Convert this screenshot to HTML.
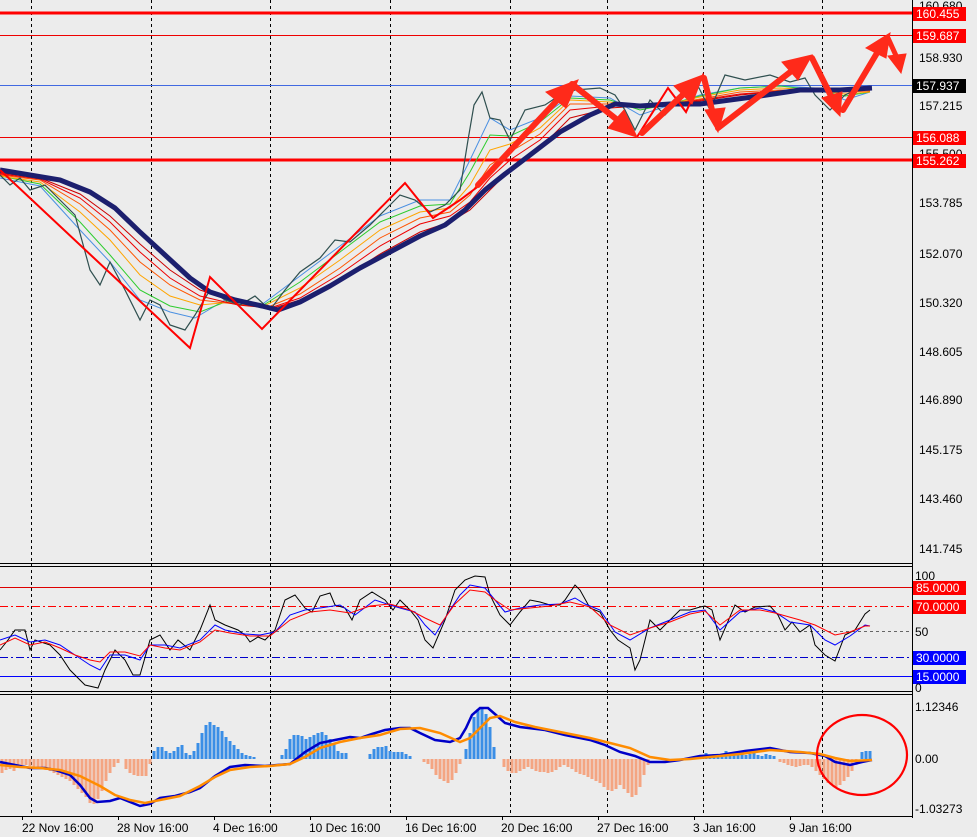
<!DOCTYPE html>
<html><head><meta charset="utf-8"><style>
html,body{margin:0;padding:0;background:#ececec;}
svg{display:block;font-family:"Liberation Sans",sans-serif;}
</style></head><body>
<svg width="977" height="837" viewBox="0 0 977 837" xmlns="http://www.w3.org/2000/svg" shape-rendering="auto">
<rect width="977" height="837" fill="#ececec"/>
<g stroke="#000" stroke-width="1" stroke-dasharray="3,3">
<line x1="31.5" y1="0" x2="31.5" y2="816"/><line x1="151.5" y1="0" x2="151.5" y2="816"/><line x1="270.5" y1="0" x2="270.5" y2="816"/><line x1="390.5" y1="0" x2="390.5" y2="816"/><line x1="510.5" y1="0" x2="510.5" y2="816"/><line x1="607.5" y1="0" x2="607.5" y2="816"/><line x1="703.5" y1="0" x2="703.5" y2="816"/><line x1="822.5" y1="0" x2="822.5" y2="816"/>
</g>
<line x1="0" y1="13" x2="912" y2="13" stroke="#f00" stroke-width="3"/>
<line x1="0" y1="35.5" x2="912" y2="35.5" stroke="#e00" stroke-width="1"/>
<line x1="0" y1="85.5" x2="912" y2="85.5" stroke="#4169e1" stroke-width="1"/>
<line x1="0" y1="137.5" x2="912" y2="137.5" stroke="#e00" stroke-width="1"/>
<line x1="0" y1="160" x2="912" y2="160" stroke="#f00" stroke-width="3"/>
<g fill="none" stroke-width="1">
<polyline stroke="#4a90e2" points="0,178 40,186 80,230 110,262 140,300 170,312 195,318 225,300 260,306 300,276 340,246 380,216 420,200 450,200 470,160 490,118 510,130 540,118 570,96 610,98 640,115 670,105 700,95 740,88 780,86 815,88 845,100 870,92"/>
<polyline stroke="#2ecc2e" points="0,176 40,184 80,222 110,255 140,290 170,306 200,312 230,300 262,306 300,282 340,252 380,222 420,206 450,204 470,172 490,135 510,136 540,122 570,98 610,100 640,110 670,104 700,96 740,88 780,86 815,90 845,96 870,92"/>
<polyline stroke="#ffa500" points="0,176 40,182 80,212 110,240 140,275 170,296 200,305 232,302 264,306 300,288 340,260 380,230 420,212 450,208 470,185 490,150 510,144 540,128 570,100 610,102 640,108 670,104 700,97 740,90 780,88 815,90 845,94 870,92"/>
<polyline stroke="#ff5500" points="0,175 40,180 80,204 110,230 140,262 170,285 200,300 235,304 268,307 300,294 340,268 380,238 420,218 450,212 470,195 490,165 510,152 540,134 570,104 610,104 640,106 670,104 700,99 740,92 780,90 815,90 845,92 870,91"/>
<polyline stroke="#e00" points="0,174 40,179 80,198 110,222 140,252 170,278 200,296 238,305 270,308 300,298 340,274 380,246 420,224 450,216 470,202 490,178 510,160 540,140 570,110 610,106 640,106 670,104 700,100 740,94 780,91 815,90 845,90 870,90"/>
<polyline stroke="#c00" points="0,173 40,178 80,194 110,216 140,244 170,270 200,290 238,302 270,309 300,300 340,280 380,254 420,232 450,222 470,210 490,190 510,170 540,148 570,118 610,108 640,106 670,104 700,101 740,95 780,91 815,89 845,89 870,89"/>
</g>
<polyline fill="none" stroke="#2f4f4f" stroke-width="1.2" points="0,175 10,185 20,178 30,190 45,185 60,200 75,215 90,270 100,285 110,262 125,290 140,320 150,300 160,305 170,325 185,330 195,315 210,290 225,300 240,305 255,296 270,310 285,290 300,272 320,258 335,240 350,242 370,225 385,210 400,195 415,200 430,212 445,205 460,190 468,140 474,105 482,92 490,118 500,120 510,140 525,110 545,105 560,95 575,90 600,88 615,95 625,110 635,130 650,100 665,115 680,100 695,80 710,110 725,75 745,80 770,75 790,82 805,78 815,95 830,110 845,95 860,88 870,86"/>
<polyline fill="none" stroke="#1c1f6e" stroke-width="5" stroke-linejoin="round" points="0,170 30,175 60,180 90,192 115,208 140,232 165,255 190,278 210,292 235,300 262,306 278,310 300,302 330,286 360,268 390,252 420,236 445,225 465,210 485,190 505,174 530,155 560,132 590,115 615,104 640,106 670,104 700,104 730,100 760,96 800,90 840,90 872,88"/>
<polyline fill="none" stroke="#f00" stroke-width="2" points="0,170 190,348 210,277 262,329 405,183 433,218 460,200 480,185"/>
<polyline fill="none" stroke="#f00" stroke-width="2" points="637,137 668,88 686,112 703,75 718,130"/>
<g fill="#ff2a1a" stroke="#ff2a1a" stroke-linecap="round">
<line x1="478" y1="185" x2="562" y2="95" stroke-width="6"/><polygon points="578,80 546,92 566,108"/>
<line x1="572" y1="84" x2="625" y2="126" stroke-width="6"/><polygon points="637,137 608,128 624,110"/>
<line x1="642" y1="133" x2="690" y2="88" stroke-width="6"/><polygon points="703,75 674,86 692,104"/>
<line x1="704" y1="78" x2="714" y2="118" stroke-width="6"/><polygon points="718,132 705,110 725,108"/>
<line x1="718" y1="128" x2="798" y2="66" stroke-width="6"/><polygon points="812,55 782,62 798,80"/>
<line x1="812" y1="58" x2="834" y2="102" stroke-width="6"/><polygon points="840,116 822,98 842,92"/>
<line x1="843" y1="110" x2="880" y2="48" stroke-width="6"/><polygon points="890,33 866,48 886,58"/>
<line x1="888" y1="38" x2="898" y2="60" stroke-width="5"/><polygon points="901,73 888,56 906,54"/>
</g>
<line x1="912.5" y1="0" x2="912.5" y2="818" stroke="#000"/>
<g font-size="12" fill="#000">
<text x="919" y="10">160.680</text>
<text x="919" y="62">158.930</text>
<text x="919" y="110">157.215</text>
<text x="919" y="158">155.500</text>
<text x="919" y="207">153.785</text>
<text x="919" y="258">152.070</text>
<text x="919" y="307">150.320</text>
<text x="919" y="356">148.605</text>
<text x="919" y="404">146.890</text>
<text x="919" y="454">145.175</text>
<text x="919" y="503">143.460</text>
<text x="919" y="553">141.745</text>
</g>
<g font-size="12">
<rect x="913" y="7" width="53" height="14" fill="#f00"/><text x="916" y="18" fill="#fff">160.455</text>
<rect x="913" y="29" width="53" height="14" fill="#f00"/><text x="916" y="40" fill="#fff">159.687</text>
<rect x="913" y="79" width="53" height="14" fill="#000"/><text x="916" y="90" fill="#fff">157.937</text>
<rect x="913" y="131" width="53" height="14" fill="#f00"/><text x="916" y="142" fill="#fff">156.088</text>
<rect x="913" y="154" width="53" height="14" fill="#f00"/><text x="916" y="165" fill="#fff">155.262</text>
</g>
<g stroke="#000" stroke-width="1"><line x1="0" y1="563.5" x2="912" y2="563.5"/><line x1="0" y1="566.5" x2="912" y2="566.5"/><line x1="0" y1="691.5" x2="912" y2="691.5"/><line x1="0" y1="694.5" x2="912" y2="694.5"/><line x1="0" y1="816.5" x2="912" y2="816.5"/></g>
<line x1="0" y1="587.5" x2="912" y2="587.5" stroke="#d00"/>
<line x1="0" y1="606.5" x2="912" y2="606.5" stroke="#f00" stroke-dasharray="8,3,2,3"/>
<line x1="0" y1="631.5" x2="912" y2="631.5" stroke="#666" stroke-dasharray="3,3"/>
<line x1="0" y1="657.5" x2="912" y2="657.5" stroke="#00c" stroke-dasharray="8,3,2,3"/>
<line x1="0" y1="676.5" x2="912" y2="676.5" stroke="#00f"/>
<g fill="none" stroke-width="1">
<polyline stroke="#000" points="0,650 8,640 15,630 25,630 30,650 35,640 50,645 60,655 70,670 85,685 98,688 105,670 115,650 125,660 133,675 140,675 150,640 160,635 170,650 178,640 190,650 200,630 210,605 215,620 225,625 238,630 245,635 250,642 258,637 265,640 275,630 285,600 295,595 305,608 312,612 320,596 330,593 335,605 345,608 352,620 360,600 372,592 385,600 393,610 400,600 410,610 418,620 425,640 433,648 445,620 455,590 465,580 475,576 485,577 490,595 500,615 510,625 520,612 530,600 540,602 550,605 560,605 565,600 575,585 580,590 590,608 600,612 610,630 618,640 630,648 635,670 640,660 650,620 660,630 670,620 680,610 690,610 700,607 705,606 712,610 720,640 735,605 745,612 755,607 770,606 778,615 785,630 792,622 800,632 810,625 815,645 825,655 835,661 845,635 855,630 865,614 870,610"/>
<polyline stroke="#00f" points="0,640 15,635 30,642 45,640 60,645 75,655 90,665 100,670 110,655 125,655 140,660 150,645 165,645 180,648 200,640 215,625 225,630 245,634 260,635 275,632 290,615 305,610 320,608 340,605 355,615 375,600 390,605 400,608 415,612 425,625 435,635 450,610 460,595 470,585 485,588 495,600 505,612 520,608 540,605 560,604 575,598 585,604 600,610 615,632 630,640 650,628 670,620 690,612 705,610 720,630 740,612 760,608 775,612 790,622 810,625 825,640 835,645 850,636 865,625 870,626"/>
<polyline stroke="#f00" points="0,645 15,638 30,645 45,642 60,648 75,655 90,660 100,662 110,652 125,652 140,656 150,645 165,648 180,650 200,642 215,630 230,633 250,636 270,636 290,620 310,612 330,610 350,613 370,606 390,604 410,610 425,618 440,625 455,604 470,590 485,592 495,600 510,610 530,608 550,606 570,602 590,607 610,625 630,635 650,628 670,622 690,614 705,611 720,625 740,610 760,610 775,613 800,620 815,625 835,635 850,632 865,626 870,626"/>
</g>
<g font-size="12">
<text x="915" y="580" fill="#000">100</text>
<rect x="913" y="581" width="53" height="14" fill="#f00"/><text x="916" y="592" fill="#fff">85.0000</text>
<rect x="913" y="600" width="53" height="14" fill="#f00"/><text x="916" y="611" fill="#fff">70.0000</text>
<text x="915" y="636" fill="#000">50</text>
<rect x="913" y="651" width="53" height="14" fill="#00f"/><text x="916" y="662" fill="#fff">30.0000</text>
<rect x="913" y="670" width="53" height="14" fill="#00f"/><text x="916" y="681" fill="#fff">15.0000</text>
<text x="915" y="692" fill="#000">0</text>
</g>
<path fill="none" stroke="#f4a582" stroke-width="3" d="M2 759v14M6 759v11M10 759v10M14 759v12M18 759v8M22 759v6M26 759v6M30 759v7M34 759v8M38 759v9M42 759v10M46 759v11M50 759v12M54 759v14M58 759v16M62 759v18M66 759v20M70 759v22M74 759v26M78 759v30M82 759v34M86 759v38M90 759v44M94 759v45M98 759v40M102 759v32M106 759v22M110 759v14M114 759v8M118 759v4M126 759v10M130 759v14M134 759v16M138 759v17M142 759v17M146 759v17M150 759v5M424 759v3M428 759v5M432 759v10M436 759v16M440 759v20M444 759v22M448 759v24M452 759v21M456 759v14M460 759v5M504 759v8M508 759v12M512 759v14M516 759v14M520 759v12M524 759v10M528 759v8M532 759v10M536 759v12M540 759v13M544 759v13M548 759v14M552 759v13M556 759v11M560 759v8M564 759v6M568 759v8M572 759v10M576 759v13M580 759v15M584 759v16M588 759v18M592 759v20M596 759v22M600 759v24M604 759v28M608 759v31M612 759v32M616 759v30M620 759v26M624 759v30M628 759v34M632 759v38M636 759v36M640 759v28M644 759v16M648 759v6M780 759v3M784 759v4M788 759v6M792 759v7M796 759v8M800 759v7M804 759v6M808 759v6M812 759v8M816 759v12M820 759v16M824 759v20M828 759v24M832 759v26M836 759v28M840 759v26M844 759v22M848 759v18M852 759v12M856 759v6"/>
<path fill="none" stroke="#3a8ee6" stroke-width="3" d="M154 759v-8M158 759v-12M162 759v-12M166 759v-8M170 759v-6M174 759v-8M178 759v-12M182 759v-14M186 759v-6M190 759v-4M194 759v-8M198 759v-16M202 759v-26M206 759v-34M210 759v-37M214 759v-34M218 759v-32M222 759v-28M226 759v-22M230 759v-18M234 759v-14M238 759v-10M242 759v-6M246 759v-4M250 759v-3M254 759v-2M282 759v-4M286 759v-10M290 759v-20M294 759v-24M298 759v-24M302 759v-23M306 759v-20M310 759v-22M314 759v-24M318 759v-26M322 759v-27M326 759v-24M330 759v-20M334 759v-16M338 759v-8M342 759v-6M346 759v-6M370 759v-5M374 759v-10M378 759v-12M382 759v-12M386 759v-13M390 759v-8M394 759v-7M398 759v-7M402 759v-7M406 759v-5M410 759v-3M466 759v-10M470 759v-26M474 759v-42M478 759v-50M482 759v-50M486 759v-45M490 759v-32M494 759v-12M702 759v-3M706 759v-6M710 759v-4M714 759v-5M718 759v-4M722 759v-5M726 759v-8M730 759v-6M734 759v-5M738 759v-4M742 759v-5M746 759v-4M750 759v-5M754 759v-6M758 759v-4M762 759v-3M766 759v-5M770 759v-4M774 759v-3M862 759v-7M866 759v-8M870 759v-8"/>
<polyline fill="none" stroke="#0000c8" stroke-width="2.5" points="0,762 15,765 30,768 45,768 55,770 70,775 80,785 90,798 97,802 110,801 120,798 130,802 140,806 150,804 160,798 175,796 190,792 200,788 215,776 230,767 245,765 265,766 290,764 305,752 320,743 335,740 350,737 360,738 372,734 385,730 400,728 410,728 420,733 435,740 450,742 460,738 466,728 472,715 480,708 488,708 496,715 505,723 520,727 545,730 565,735 590,740 605,745 620,752 635,756 650,762 665,762 680,760 700,756 720,755 745,751 770,748 790,752 810,753 825,756 835,762 850,765 862,762 872,760"/>
<polyline fill="none" stroke="#ff8c00" stroke-width="2.5" points="0,765 20,767 40,768 60,770 80,776 100,786 115,795 130,800 145,803 160,800 180,796 200,786 215,777 230,770 250,767 270,766 290,764 305,757 320,748 340,742 360,738 380,735 400,729 420,728 440,733 460,742 470,738 480,728 490,718 500,716 515,722 535,727 560,732 590,738 610,743 630,748 650,757 670,760 690,759 710,757 740,754 770,750 800,752 820,754 835,758 850,761 872,760"/>
<g font-size="12" fill="#000">
<text x="915" y="711">1.12346</text>
<text x="915" y="763">0.00</text>
<text x="915" y="813">-1.03273</text>
</g>
<ellipse cx="862" cy="755" rx="45" ry="40" fill="none" stroke="#f00" stroke-width="2.2"/>
<g stroke="#000"><line x1="22.5" y1="816" x2="22.5" y2="820"/><line x1="118.5" y1="816" x2="118.5" y2="820"/><line x1="214.5" y1="816" x2="214.5" y2="820"/><line x1="310.5" y1="816" x2="310.5" y2="820"/><line x1="406.5" y1="816" x2="406.5" y2="820"/><line x1="502.5" y1="816" x2="502.5" y2="820"/><line x1="598.5" y1="816" x2="598.5" y2="820"/><line x1="694.5" y1="816" x2="694.5" y2="820"/><line x1="790.5" y1="816" x2="790.5" y2="820"/></g>
<g font-size="12" fill="#000">
<text x="22" y="832">22 Nov 16:00</text>
<text x="117" y="832">28 Nov 16:00</text>
<text x="213" y="832">4 Dec 16:00</text>
<text x="309" y="832">10 Dec 16:00</text>
<text x="405" y="832">16 Dec 16:00</text>
<text x="501" y="832">20 Dec 16:00</text>
<text x="597" y="832">27 Dec 16:00</text>
<text x="693" y="832">3 Jan 16:00</text>
<text x="789" y="832">9 Jan 16:00</text>
</g>
</svg>
</body></html>
